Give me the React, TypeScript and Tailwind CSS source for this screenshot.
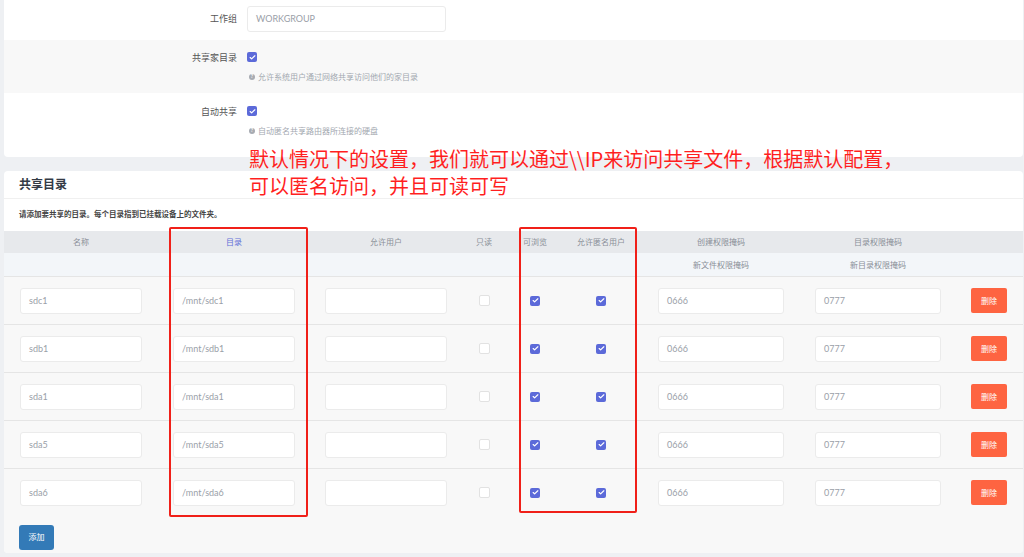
import { Check } from "lucide-react";

const FONT = "font-['Lato','Noto_Sans_CJK_SC',sans-serif]";
const INPUT_STYLE =
  "w-[122px] h-[26px] px-[8px] bg-white border border-[#ebebeb] rounded-[3px] text-[9px] text-[#9aa0a8] flex items-center";
const COLS = "grid grid-cols-[154px_152px_152px_44px_58px_74px_166px_148px_71px]";

const shares = ["sdc1", "sdb1", "sda1", "sda5", "sda6"];

const CheckBox = ({ checked }: { checked: boolean }) =>
  checked ? (
    <span className="w-[10px] h-[10px] rounded-[2px] bg-[#5c6ad9] flex items-center justify-center">
      <Check size={7} strokeWidth={4} className="text-white" />
    </span>
  ) : (
    <span className="w-[11px] h-[11px] rounded-[2px] bg-white border border-[#e2e2e2]" />
  );

const HelpText = ({ text }: { text: string }) => (
  <div className="flex items-center gap-[3px] text-[8px] text-[#a3a8b0] mt-[9px] ml-[2px]">
    <span className="w-[6px] h-[6px] rounded-full bg-[#a7abb2] text-white text-[5px] font-bold flex items-center justify-center">
      ?
    </span>
    {text}
  </div>
);

export default function App() {
  return (
    <div className={`relative w-full h-[557px] overflow-hidden bg-[#eef0f3] pl-[4px] pr-[1px] ${FONT}`}>
      {/* 基本设置 */}
      <div className="bg-white rounded-b-[4px] flex flex-col">
        <div className="h-[40px] flex pt-[6px]">
          <div className="w-[233px] text-right text-[9px] text-[#555] pt-[6px]">工作组</div>
          <div className={`${INPUT_STYLE} ml-[10px] w-[199px] text-[9px]`}>WORKGROUP</div>
        </div>
        <div className="h-[53px] flex pt-[12px] bg-[#f8f8f8]">
          <div className="w-[233px] text-right text-[9px] text-[#555] leading-[11px]">共享家目录</div>
          <div className="ml-[10px] flex flex-col">
            <CheckBox checked />
            <HelpText text="允许系统用户通过网络共享访问他们的家目录" />
          </div>
        </div>
        <div className="h-[64px] flex pt-[13px]">
          <div className="w-[233px] text-right text-[9px] text-[#555] leading-[11px]">自动共享</div>
          <div className="ml-[10px] flex flex-col">
            <CheckBox checked />
            <HelpText text="自动匿名共享路由器所连接的硬盘" />
          </div>
        </div>
      </div>

      {/* 共享目录 */}
      <div className="mt-[14px] bg-white rounded-[4px] flex flex-col overflow-hidden">
        <div className="h-[28px] flex items-center px-[15px] text-[12px] font-bold text-[#333a45] border-b border-[#f0f0f0]">
          共享目录
        </div>
        <div className="h-[32px] flex items-center px-[15px] text-[7.5px] font-semibold text-[#444]">
          请添加要共享的目录。每个目录指到已挂载设备上的文件夹。
        </div>

        <div className={`${COLS} h-[22px] bg-[#e7e9ec] text-[8px] text-[#8a8f98] items-center text-center`}>
          <div>名称</div>
          <div className="text-[#6470d8]">目录</div>
          <div>允许用户</div>
          <div>只读</div>
          <div>可浏览</div>
          <div>允许匿名用户</div>
          <div>创建权限掩码</div>
          <div>目录权限掩码</div>
          <div />
        </div>
        <div className={`${COLS} h-[23px] bg-[#f3f6f9] text-[8px] text-[#8a8f98] items-center text-center`}>
          <div />
          <div />
          <div />
          <div />
          <div />
          <div />
          <div>新文件权限掩码</div>
          <div>新目录权限掩码</div>
          <div />
        </div>

        <div className="bg-[#f8f8f8] flex flex-col">
          {shares.map((name) => (
            <div key={name} className={`${COLS} h-[48px] border-t border-[#e5e5e5] items-center justify-items-center`}>
              <div className={INPUT_STYLE}>{name}</div>
              <div className={INPUT_STYLE}>/mnt/{name}</div>
              <div className={INPUT_STYLE} />
              <CheckBox checked={false} />
              <CheckBox checked />
              <CheckBox checked />
              <div className={`${INPUT_STYLE} w-[126px]`}>0666</div>
              <div className={`${INPUT_STYLE} w-[126px]`}>0777</div>
              <button className="w-[36px] h-[25px] rounded-[2px] bg-[#fe6441] text-white text-[8px] ml-[3px]">删除</button>
            </div>
          ))}
          <div className="h-[37px] pt-[6px] px-[15px]">
            <button className="w-[35px] h-[25px] rounded-[3px] bg-[#337ab7] text-white text-[8px]">添加</button>
          </div>
        </div>
      </div>

      {/* 标注 */}
      <div className="absolute left-[169px] top-[227px] w-[139px] h-[290px] border-2 border-[#f02019] rounded-[2px]" />
      <div className="absolute left-[519px] top-[227px] w-[118px] h-[286px] border-2 border-[#f02019] rounded-[2px]" />
      <div className="absolute left-[249px] top-[145px] text-[20px] leading-[27px] text-[#ff1f1f] font-['Noto_Sans_CJK_SC',sans-serif]">
        <div>默认情况下的设置，我们就可以通过\\IP来访问共享文件，根据默认配置，</div>
        <div>可以匿名访问，并且可读可写</div>
      </div>
    </div>
  );
}
